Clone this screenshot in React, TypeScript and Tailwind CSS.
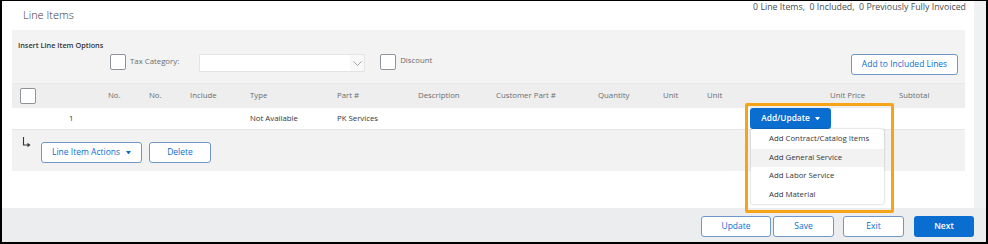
import type { ReactNode } from "react";

const COLS: { label: string; w: number }[] = [
  { label: "No.", w: 41 },
  { label: "No.", w: 41 },
  { label: "Include", w: 60 },
  { label: "Type", w: 87 },
  { label: "Part #", w: 81 },
  { label: "Description", w: 78 },
  { label: "Customer Part #", w: 102 },
  { label: "Quantity", w: 65 },
  { label: "Unit", w: 44 },
  { label: "Unit", w: 123 },
  { label: "Unit Price", w: 69 },
  { label: "Subtotal", w: 60 },
];

const MENU = ["Add Contract/Catalog Items", "Add General Service", "Add Labor Service", "Add Material"];

function Caret({ className = "" }: { className?: string }) {
  return (
    <svg width="5" height="3.5" viewBox="0 0 6 4" className={className}>
      <path d="M0 0 L6 0 L3 4 Z" fill="currentColor" />
    </svg>
  );
}

function Checkbox() {
  return <div className="h-[16px] w-[16px] rounded-[2px] border border-[#8d9399] bg-white" />;
}

function OutlineButton({ children, className = "" }: { children: ReactNode; className?: string }) {
  return (
    <button
      className={`flex items-center justify-center rounded-[3px] border border-[#6f98c8] bg-white text-[8.5px] text-[#0a6ed1] ${className}`}
    >
      {children}
    </button>
  );
}

export default function App() {
  return (
    <div className="relative flex h-[244px] w-[988px] flex-col border-x-2 border-b-2 border-t border-black bg-white font-['Open_Sans',sans-serif] text-[#32363a]">
      <div className="flex h-[207px]">
        <div className="flex flex-1 flex-col">
          {/* title row */}
          <div className="flex h-[29px] justify-between">
            <div className="pl-[21px] pt-[6px] text-[11px] font-light text-[#32363a]">Line Items</div>
            <div className="pr-[8px] text-[8.8px] text-[#4a4d50]">
              0 Line Items,&nbsp; 0 Included,&nbsp; 0 Previously Fully Invoiced
            </div>
          </div>

          <div className="ml-[10px] mr-[9px] flex flex-col">
            {/* insert options */}
            <div className="flex h-[53px] flex-col bg-[#f3f3f3]">
              <div className="pl-[6px] pt-[10px] text-[7.3px] font-semibold leading-[10px] text-[#32363a]">
                Insert Line Item Options
              </div>
              <div className="mt-[4px] flex items-start">
                <div className="ml-[98px] flex items-center">
                  <Checkbox />
                  <span className="ml-[4px] text-[7.8px] text-[#6a6d70]">Tax Category:</span>
                </div>
                <div className="ml-[20px] flex h-[18px] w-[166px] items-center justify-end rounded-[1px] border border-[#e4e4e4] bg-white">
                  <div className="flex h-full w-[14px] items-center justify-center bg-[#f8f8f8]">
                    <svg width="9" height="5" viewBox="0 0 9 5">
                      <path d="M0.5 0.5 L4.5 4.5 L8.5 0.5" fill="none" stroke="#8a8d90" strokeWidth="0.8" />
                    </svg>
                  </div>
                </div>
                <div className="ml-[15px] flex items-start">
                  <Checkbox />
                  <span className="ml-[4px] mt-[1px] text-[7.8px] text-[#6a6d70]">Discount</span>
                </div>
                <OutlineButton className="ml-auto mr-[7px] h-[21px] w-[107px]">Add to Included Lines</OutlineButton>
              </div>
            </div>

            {/* header row */}
            <div className="flex h-[25px] items-center border-t border-[#e8e8e8] bg-[#eeeeee] text-[7.8px] text-[#6a6d70]">
              <div className="w-[96px] pl-[8px]">
                <Checkbox />
              </div>
              {COLS.map((c, i) => (
                <div key={i} style={{ width: c.w }} className="shrink-0">
                  {c.label}
                </div>
              ))}
            </div>

            {/* data row */}
            <div className="flex h-[22px] items-center border-b border-[#e6e6e6] bg-white text-[7.8px]">
              <div className="w-[238px] pl-[57px]">1</div>
              <div className="w-[87px]">Not Available</div>
              <div className="w-[413px]">PK Services</div>
              <button className="flex h-[21px] w-[81px] items-center justify-center gap-[5px] rounded-[3px] bg-[#0a6ed1] text-[8.3px] font-semibold text-white">
                Add/Update
                <Caret />
              </button>
            </div>

            {/* actions */}
            <div className="flex h-[41px] items-start bg-[#f2f2f2] pl-[10px]">
              <svg width="9" height="11" viewBox="0 0 9 11" className="mt-[7px]">
                <path d="M1.5 0 L1.5 8 L6.5 8" fill="none" stroke="#32363a" strokeWidth="1.1" />
                <path d="M5.5 5.8 L8.5 8 L5.5 10.2 Z" fill="#32363a" />
              </svg>
              <OutlineButton className="ml-[10px] mt-[12px] h-[21px] w-[101px] gap-[6px]">
                Line Item Actions
                <Caret />
              </OutlineButton>
              <OutlineButton className="ml-[7px] mt-[12px] h-[21px] w-[62px]">Delete</OutlineButton>
            </div>
          </div>
        </div>
        <div className="w-[12px] bg-[#f0f1f3]" />
      </div>

      {/* footer */}
      <div className="flex flex-1 items-start justify-end bg-[#ecedef] pr-[12px] pt-[8px]">
        <OutlineButton className="h-[21px] w-[70px]">Update</OutlineButton>
        <OutlineButton className="ml-[2px] h-[21px] w-[61px]">Save</OutlineButton>
        <OutlineButton className="ml-[9px] h-[21px] w-[61px]">Exit</OutlineButton>
        <button className="ml-[10px] flex h-[21px] w-[60px] items-center justify-center rounded-[3px] bg-[#0a6ed1] text-[8.5px] font-semibold text-white">
          Next
        </button>
      </div>

      {/* dropdown menu */}
      <div className="absolute left-[749px] top-[128px] flex w-[133px] flex-col rounded-[2px] bg-white pt-[1px] shadow-[0_0_2px_rgba(0,0,0,0.35)]">
        {MENU.map((m, i) => (
          <div
            key={m}
            className={`flex h-[18.5px] items-center pl-[18px] text-[7.8px] text-[#32363a] ${i === 1 ? "bg-[#f2f2f2]" : ""}`}
          >
            {m}
          </div>
        ))}
      </div>

      {/* highlight */}
      <div className="pointer-events-none absolute left-[743px] top-[102px] h-[110px] w-[149px] rounded-[2px] border-[3px] border-[#f5a418]" />
    </div>
  );
}
